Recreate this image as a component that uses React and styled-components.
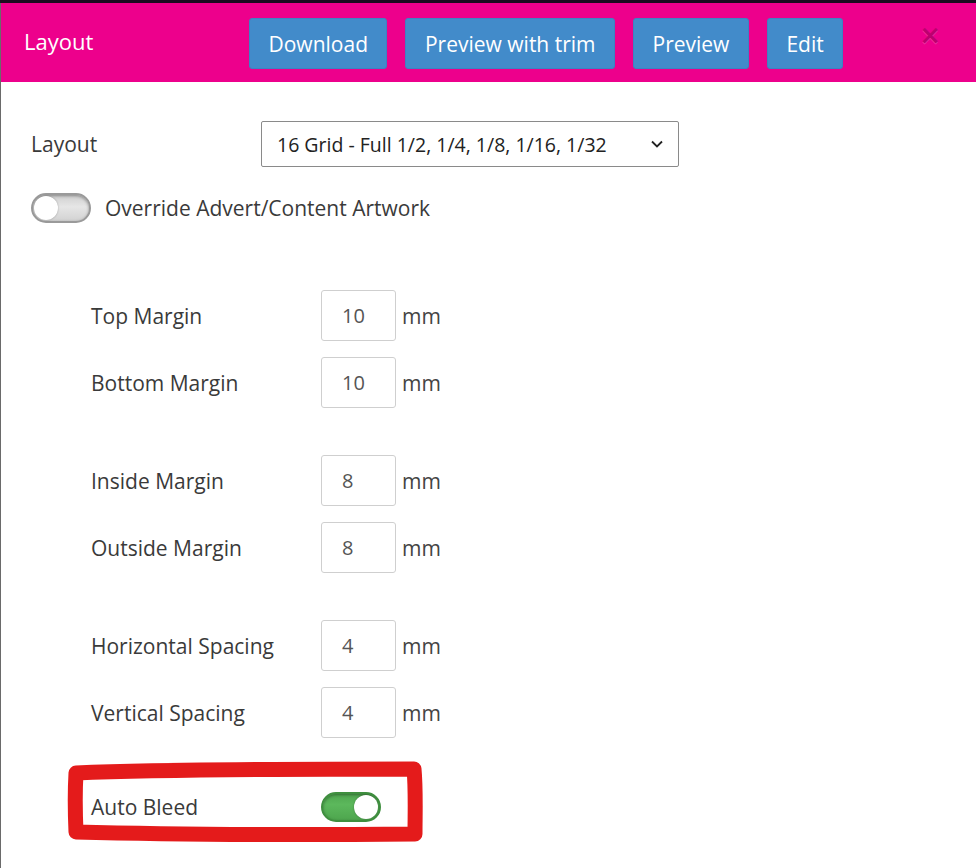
import React from "react";
import styled, { createGlobalStyle } from "styled-components";

const Global = createGlobalStyle`
  html, body { margin: 0; padding: 0; background: #fff; }
  body { font-family: "Open Sans", "Noto Sans", sans-serif; }
  * { box-sizing: border-box; }
`;

const Page = styled.div`
  position: relative;
  width: 976px;
  height: 868px;
  overflow: hidden;
  background: #1a0b1f;
`;

const BackNav = styled.div`
  height: 3px;
  overflow: hidden;
  display: flex;
  align-items: flex-end;
  gap: 36px;
  font-size: 22px;
  line-height: 22px;
  color: #8a8090;
  white-space: nowrap;
  & > span { display: block; transform: translateY(-8px); }
`;

const Modal = styled.div`
  height: 865px;
  background: #fff;
  border-left: 1px solid #6a6a6a;
  display: flex;
  flex-direction: column;
`;

const Header = styled.div`
  height: 79px;
  background: #ed008c;
  display: flex;
  align-items: flex-start;
  padding: 15px 0 0 23px;
`;

const Title = styled.div`
  color: #fff;
  font-size: 22px;
  font-weight: 400;
  width: 225px;
  line-height: 47px;
`;

const Buttons = styled.div`
  display: flex;
  gap: 18px;
`;

const Button = styled.button`
  height: 51px;
  padding: 0 18.5px;
  background: #428bca;
  border: 1px solid #3c82c2;
  border-radius: 3px;
  color: #fff;
  font-family: "Open Sans", sans-serif;
  font-size: 21px;
  cursor: pointer;
`;

const Close = styled.span`
  margin-left: auto;
  margin-right: 35px;
  margin-top: 4px;
  font-size: 26px;
  font-weight: 700;
  line-height: 26px;
  color: #000;
  opacity: 0.2;
  text-shadow: 0 1px 0 #fff;
  font-family: "DejaVu Sans", sans-serif;
`;

const Body = styled.div`
  padding: 39px 0 0 30px;
  color: #333;
  font-size: 21px;
`;

const Row = styled.div`
  display: flex;
  align-items: center;
  margin-top: ${(p) => p.$top || 0}px;
  padding-left: ${(p) => p.$indent || 0}px;
`;

const Label = styled.div`
  width: ${(p) => p.$w}px;
  color: #3a3a3a;
  font-size: 21px;
`;

const SelectBox = styled.div`
  width: 418px;
  height: 46px;
  border: 1px solid #8a8a8a;
  border-radius: 2px;
  display: flex;
  align-items: center;
  padding: 0 14px 0 15px;
  font-size: 19.5px;
  color: #222;
  justify-content: space-between;
`;

const Switch = styled.div`
  position: relative;
  width: 60px;
  height: 30px;
  border-radius: 15px;
  background: ${(p) =>
    p.$on
      ? "linear-gradient(#4fa64f, #5cb85c 40%, #4ea64e)"
      : "linear-gradient(#cfcfcf, #e6e6e6 45%, #d2d2d2)"};
  border: 2px solid ${(p) => (p.$on ? "#3f8f3f" : "#9a9a9a")};
  box-shadow: inset 0 1px 3px rgba(0, 0, 0, 0.35);
  &::after {
    content: "";
    position: absolute;
    top: 1px;
    ${(p) => (p.$on ? "right: 1px;" : "left: 1px;")}
    width: 24px;
    height: 24px;
    border-radius: 50%;
    background: #fff;
    box-shadow: 0 0 2px rgba(0, 0, 0, 0.3);
  }
`;

const SwitchLabel = styled.span`
  margin-left: 14px;
  color: #3a3a3a;
`;

const Fields = styled.div`
  margin-top: 67px;
  display: flex;
  flex-direction: column;
`;

const Group = styled.div`
  display: flex;
  flex-direction: column;
  gap: 16px;
  margin-top: ${(p) => p.$top || 0}px;
`;

const NumInput = styled.div`
  width: 75px;
  height: 51px;
  border: 1px solid #cfcfcf;
  border-radius: 3px;
  display: flex;
  align-items: center;
  padding-left: 20px;
  font-size: 20px;
  color: #555;
`;

const Unit = styled.span`
  margin-left: 6px;
  color: #444;
  font-size: 21px;
`;

const Annotation = styled.svg`
  position: absolute;
  left: 0;
  top: 0;
  pointer-events: none;
`;

const Chevron = () => (
  <svg width="14" height="10" viewBox="0 0 14 10">
    <path d="M2 2.5 L7 7.5 L12 2.5" fill="none" stroke="#222" strokeWidth="1.8" />
  </svg>
);

const groups = [
  [
    ["Top Margin", "10"],
    ["Bottom Margin", "10"],
  ],
  [
    ["Inside Margin", "8"],
    ["Outside Margin", "8"],
  ],
  [
    ["Horizontal Spacing", "4"],
    ["Vertical Spacing", "4"],
  ],
];

export default function App() {
  return (
    <Page>
      <Global />
      <BackNav>
        <span>Invoice</span>
        <span>Actions</span>
        <span>System</span>
        <span>Articles</span>
      </BackNav>
      <Modal>
        <Header>
          <Title>Layout</Title>
          <Buttons>
            <Button>Download</Button>
            <Button>Preview with trim</Button>
            <Button>Preview</Button>
            <Button>Edit</Button>
          </Buttons>
          <Close>×</Close>
        </Header>
        <Body>
          <Row>
            <Label $w={230}>Layout</Label>
            <SelectBox>
              <span>16 Grid - Full 1/2, 1/4, 1/8, 1/16, 1/32</span>
              <Chevron />
            </SelectBox>
          </Row>
          <Row $top={26}>
            <Switch />
            <SwitchLabel>Override Advert/Content Artwork</SwitchLabel>
          </Row>
          <Fields>
            {groups.map((g, gi) => (
              <Group key={gi} $top={gi === 0 ? 0 : 47}>
                {g.map(([label, val]) => (
                  <Row key={label} $indent={60}>
                    <Label $w={230}>{label}</Label>
                    <NumInput>{val}</NumInput>
                    <Unit>mm</Unit>
                  </Row>
                ))}
              </Group>
            ))}
            <Row $indent={60} $top={54}>
              <Label $w={230}>Auto Bleed</Label>
              <Switch $on />
            </Row>
          </Fields>
        </Body>
      </Modal>
      <Annotation width="976" height="868">
        <path
          d="M76 773 C 150 770, 300 769, 414 769 C 416 790, 415 815, 415 834 C 300 835, 150 834, 76 832 C 75 810, 75 790, 76 773 Z"
          fill="none"
          stroke="#e41b1b"
          strokeWidth="15"
          strokeLinejoin="round"
        />
      </Annotation>
    </Page>
  );
}
